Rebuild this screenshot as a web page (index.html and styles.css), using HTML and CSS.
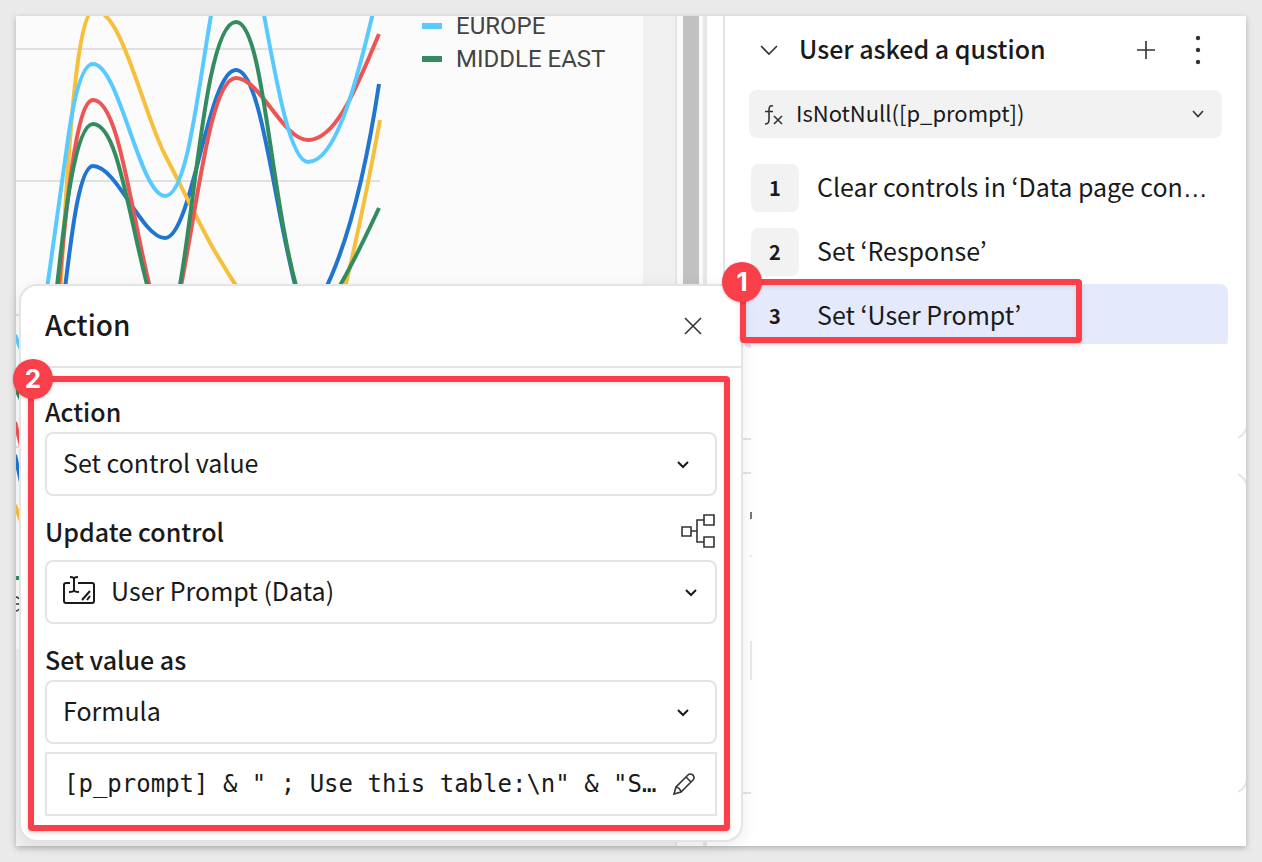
FILE: index.html
```html
<!DOCTYPE html>
<html lang="en">
<head>
    <meta charset="UTF-8">
    <meta name="viewport" content="width=device-width, initial-scale=1.0">
    <title>Action editor</title>
    <link rel="stylesheet" href="styles.css">
</head>
<body>
<div class="app">
    <main class="canvas">
        <svg class="chart" width="627" height="633" viewBox="16 16 627 633" role="img" aria-label="Sales by region">
            <g class="grid-lines">
                <path d="M16 49H380M16 181H380M16 315H380M16 447H380"/>
            </g>
            <g class="series">
                <path class="blue" d="M64 296C70 250 78 166 93 166C117 166 142 238 165 238C192 238 208 70 236 70C262 70 274 210 298 296M322 296C348 246 366 170 379 84"/>
                <path class="yellow" d="M60 296C66 200 74 12 94 10C122 10 142 110 165 155C195 212 205 240 243 296M343 296C358 235 369 180 380 120"/>
                <path class="red" d="M58 296C66 210 76 100 93 100C119 100 130 210 152 296M179 296C197 210 210 78 236 78C260 78 283 140 308 140C338 140 360 78 379 34"/>
                <path class="sky" d="M46 296C55 230 62 180 69 132C76 86 84 64 93 64C119 64 140 196 165 196C188 196 198 86 213 4M262 4C276 80 290 162 308 162C334 162 354 95 375 4"/>
                <path class="green" d="M56 296C64 220 75 124 93 124C118 124 128 215 150 296M178 296C195 210 206 22 236 22C264 22 270 200 299 296M334 296C352 266 366 236 379 208"/>
                <path class="sky" d="M15 335L22 352"/>
                <path class="green" d="M15 387L21 400M15 578H22"/>
                <path class="red" d="M15 422L21 446"/>
                <path class="blue" d="M15 455L21 482"/>
                <path class="yellow" d="M15 505L22 524"/>
            </g>
            <g class="legend">
                <path class="sky" d="M422 26H442"/>
                <text x="456" y="34">EUROPE</text>
                <path class="green" d="M422 59H442"/>
                <text x="456" y="67">MIDDLE EAST</text>
            </g>
            <path class="axis" d="M16 597Q18 597 19 599M16 604H20M16 611Q18 611 19 609"/>
        </svg>
        <div class="scrollbar"></div>
    </main>

    <aside class="sidebar">
        <section class="card sequence">
            <header class="sequence-header">
                <button class="icon-button" aria-label="Collapse">
                    <svg width="20" height="12" viewBox="0 0 20 12"><path d="M2 2L10 10L18 2"/></svg>
                </button>
                <h2>User asked a qustion</h2>
                <button class="icon-button" aria-label="Add action">
                    <svg width="20" height="20" viewBox="0 0 20 20"><path d="M10 1V19M1 10H19"/></svg>
                </button>
                <button class="icon-button more" aria-label="More">
                    <svg width="8" height="30" viewBox="0 0 8 30"><circle cx="4" cy="3" r="2.2"/><circle cx="4" cy="15" r="2.2"/><circle cx="4" cy="27" r="2.2"/></svg>
                </button>
            </header>
            <button class="condition">
                <svg width="20" height="24" viewBox="0 0 20 24"><path d="M9 4C6 3 5 5 5 8V18C5 21 4 22 1 22M1 9.500H9M10 14L18 22M18 14L10 22"/></svg>
                <span>IsNotNull([p_prompt])</span>
                <svg width="14" height="10" viewBox="0 0 14 10"><path d="M2 2L7 7.500L12 2"/></svg>
            </button>
            <ol class="steps">
                <li><span class="number">1</span><span class="step-name">Clear controls in ‘Data page con<span class="dots">…</span></span></li>
                <li><span class="number">2</span><span class="step-name">Set ‘Response’</span></li>
                <li class="selected"><span class="number">3</span><span class="step-name">Set ‘User Prompt’</span>
                    <div class="callout"><span class="pin">1</span></div>
                </li>
            </ol>
        </section>
        <section class="card next">
            <svg class="edge" width="2" height="170" viewBox="0 0 2 170"><path class="dark" d="M1 2V9"/><path d="M0 46H2"/><path d="M1 131V171"/></svg>
        </section>
    </aside>

    <form class="dialog" onsubmit="return false">
        <header class="dialog-header">
            <h1>Action</h1>
            <button type="button" class="icon-button" aria-label="Close">
                <svg width="20" height="20" viewBox="0 0 20 20"><path d="M2 2L18 18M18 2L2 18"/></svg>
            </button>
        </header>
        <div class="dialog-body">
            <div class="field">
                <div class="label-row"><label for="action">Action</label></div>
                <div class="select">
                    <select id="action"><option>Set control value</option></select>
                    <svg width="14" height="10" viewBox="0 0 14 10"><path d="M2 3L7 8L12 3"/></svg>
                </div>
            </div>
            <div class="field control-field">
                <div class="label-row">
                    <label for="control">Update control</label>
                    <button type="button" class="icon-button" aria-label="Show lineage">
                        <svg width="34" height="34" viewBox="0 0 34 34"><path d="M1 13H10V22H1ZM23 1H33V11H23ZM23 23H33V33H23ZM10 17H16M23 6H16V28H23"/></svg>
                    </button>
                </div>
                <div class="select">
                    <svg class="control-icon" width="34" height="30" viewBox="0 0 34 30"><path d="M8 6H4Q2 6 2 8V24Q2 26 4 26H30Q32 26 32 24V8Q32 6 30 6H16M8 0Q12 0 12 2Q12 0 16 0M12 2V13M7 15Q12 15 12 13Q12 15 17 15M20 23L28 14M25 23L28 19"/></svg>
                    <select id="control"><option>User Prompt (Data)</option></select>
                    <svg width="14" height="10" viewBox="0 0 14 10"><path d="M2 3L7 8L12 3"/></svg>
                </div>
            </div>
            <div class="field">
                <div class="label-row"><label for="value-type">Set value as</label></div>
                <div class="select">
                    <select id="value-type"><option>Formula</option></select>
                    <svg width="14" height="10" viewBox="0 0 14 10"><path d="M2 3L7 8L12 3"/></svg>
                </div>
                <div class="formula">
                    <input type="text" aria-label="Formula" readonly value='[p_prompt] &amp; " ; Use this table:\n" &amp; "S…'>
                    <button type="button" class="icon-button" aria-label="Edit formula">
                        <svg width="22" height="22" viewBox="0 0 22 22"><path d="M1 21L3 14L15 2Q17 0 20 2Q22 5 20 7L8 19ZM13 4L18 9M3 14Q7 15 8 19"/></svg>
                    </button>
                </div>
            </div>
            <div class="callout"><span class="pin">2</span></div>
        </div>
    </form>
</div>
</body>
</html>
```
FILE: styles.css
```css
* {
    box-sizing: border-box;
}

body {
    font-family: "Noto Sans CJK KR", "Noto Sans", sans-serif;
    font-size: 25px;
    margin: 0;
    padding: 16px;
    background-color: #eaeaea;
    color: #1a1a1a;
}

h1, h2 {
    margin: 0;
    padding-bottom: 4px;
    font-weight: 500;
}

button, select, input {
    font: inherit;
    color: inherit;
    border: 0;
    margin: 0;
    padding: 0;
    background: none;
}

svg {
    display: block;
    flex: none;
    fill: none;
    stroke: #333;
    stroke-width: 1.6;
}

.app {
    position: relative;
    display: flex;
    min-height: calc(100vh - 32px);
    background: white;
    box-shadow: 0 2px 6px rgba(0, 0, 0, 0.25);
}

/* chart side */
.canvas {
    display: flex;
    justify-content: space-between;
    width: 691px;
    flex: none;
    background: #f0f0f0;
}

.chart {
    background: #fbfbfb;
}

.grid-lines {
    stroke: #e0e0e0;
    stroke-width: 2;
}

.series {
    stroke-width: 4;
}

.legend {
    stroke-width: 6;
}

.chart .blue {
    stroke: #1f75d0;
}

.chart .yellow {
    stroke: #f6bf3c;
}

.chart .red {
    stroke: #ec5553;
}

.chart .sky {
    stroke: #59caff;
}

.chart .green {
    stroke: #338c60;
}

.chart text {
    font-family: Roboto, sans-serif;
    font-size: 24px;
    fill: #444;
    stroke: none;
}

.scrollbar {
    width: 32px;
    background: #fafafa;
    border-left: 2px solid #e4e4e4;
    border-right: 4px solid #e6e6e6;
    padding: 0 4px 0 6px;
}

.scrollbar::before {
    content: "";
    display: block;
    width: 16px;
    height: 600px;
    background: #c1c1c1;
}

/* action list side */
.sidebar {
    flex: 1;
    min-width: 0;
    display: flex;
    flex-direction: column;
    gap: 32px;
    padding-left: 16px;
    overflow: hidden;
}

.card {
    position: relative;
    margin-right: -2px;
    border: 2px solid #e4e4e4;
    border-radius: 16px;
}

.card::after {
    content: "";
    position: absolute;
    inset: -2px 8px -2px 26px;
    background: white;
}

.sequence {
    border-top: 0;
    border-radius: 0 0 16px 16px;
    padding: 0 18px 90px;
}

.sequence::after {
    top: 328px;
}

.next {
    height: 322px;
}

.edge {
    position: absolute;
    left: 25px;
    top: 36px;
    stroke: #e4e4e4;
    z-index: 1;
}

.edge .dark {
    stroke: #555;
}

.icon-button {
    display: grid;
    place-items: center;
    cursor: pointer;
}

.sequence-header {
    display: flex;
    align-items: center;
    height: 68px;
    margin-bottom: 6px;
    padding: 0 26px 0 16px;
}

.sequence-header h2 {
    flex: 1;
    font-size: 25px;
    margin-left: 20px;
}

.more {
    margin-left: 38px;
}

.more svg {
    fill: #333;
    stroke: none;
}

.condition {
    display: flex;
    align-items: center;
    width: calc(100% - 12px);
    height: 48px;
    margin-left: 6px;
    padding: 0 17px 0 15px;
    border-radius: 8px;
    background: #f2f2f2;
    font-size: 22px;
    text-align: left;
    cursor: pointer;
}

.condition span {
    flex: 1;
    margin-left: 12px;
    padding-bottom: 4px;
}

.steps {
    list-style: none;
    margin: 18px 0 0;
    padding: 0;
}

.steps li {
    position: relative;
    display: flex;
    align-items: center;
    gap: 18px;
    height: 64px;
    padding: 0 16px 0 8px;
}

.number {
    flex: none;
    width: 48px;
    line-height: 48px;
    border-radius: 8px;
    background: #f2f2f2;
    font-size: 20px;
    font-weight: 700;
    text-align: center;
}

.step-name {
    padding-bottom: 4px;
    white-space: nowrap;
}

.dots {
    font-family: "Liberation Sans", sans-serif;
}

.steps .selected {
    border-radius: 8px;
    background: #e4eafb;
}

.selected .number {
    background: none;
}

/* numbered red frames */
.callout {
    position: absolute;
    z-index: 2;
    border: 6px solid #f83f4a;
    border-radius: 4px;
    box-shadow: 0 2px 4px rgba(0, 0, 0, 0.15), inset 0 2px 4px rgba(0, 0, 0, 0.1);
    pointer-events: none;
}

.selected .callout {
    left: -3px;
    top: -5px;
    width: 342px;
    height: 64px;
}

.dialog-body .callout {
    inset: 8px 11px 9px 7px;
}

.pin {
    position: absolute;
    left: -24px;
    top: -23px;
    width: 40px;
    border-radius: 50%;
    background: #f83f4a;
    box-shadow: 0 1px 3px rgba(0, 0, 0, 0.2);
    color: white;
    font-family: Inter, sans-serif;
    font-size: 26px;
    font-weight: 700;
    line-height: 40px;
    text-align: center;
}

.dialog .pin {
    left: -21px;
}

/* dialog */
.dialog {
    position: absolute;
    z-index: 1;
    left: 3px;
    top: 268px;
    width: 724px;
    border: 2px solid #e4e4e4;
    border-radius: 18px;
    background: white;
    box-shadow: 0 4px 16px rgba(0, 0, 0, 0.08);
}

.dialog-header {
    display: flex;
    align-items: center;
    justify-content: space-between;
    height: 82px;
    padding: 0 38px 0 24px;
    border-bottom: 2px solid #e4e4e4;
}

.dialog-header h1 {
    font-size: 28px;
}

.dialog-body {
    position: relative;
    display: grid;
    gap: 18px;
    padding: 26px 24px 24px;
}

.label-row {
    display: flex;
    align-items: center;
    justify-content: space-between;
    height: 38px;
    padding: 0 2px 4px 0;
    font-weight: 500;
}

.control-field .label-row {
    margin-bottom: 8px;
}

.select {
    display: grid;
    align-items: center;
}

.select > * {
    grid-area: 1 / 1;
}

.select select {
    width: 100%;
    height: 64px;
    padding: 0 16px 4px;
    border: 2px solid #e4e4e4;
    border-radius: 8px;
    appearance: none;
}

.select svg {
    justify-self: end;
    margin-right: 27px;
    stroke: #1a1a1a;
    stroke-width: 2;
    pointer-events: none;
}

.control-field select {
    padding-left: 64px;
}

.control-field .select svg {
    margin-right: 19px;
}

.select .control-icon {
    justify-self: start;
    margin-left: 17px;
    overflow: visible;
}

.formula {
    display: flex;
    align-items: center;
    height: 64px;
    margin-top: 8px;
    padding: 0 20px 0 17px;
    border: 2px solid #e4e4e4;
}

.formula input {
    flex: 1;
    min-width: 0;
    margin-right: 12px;
    font-family: "DejaVu Sans Mono", monospace;
    font-size: 24px;
    text-overflow: ellipsis;
}
```
